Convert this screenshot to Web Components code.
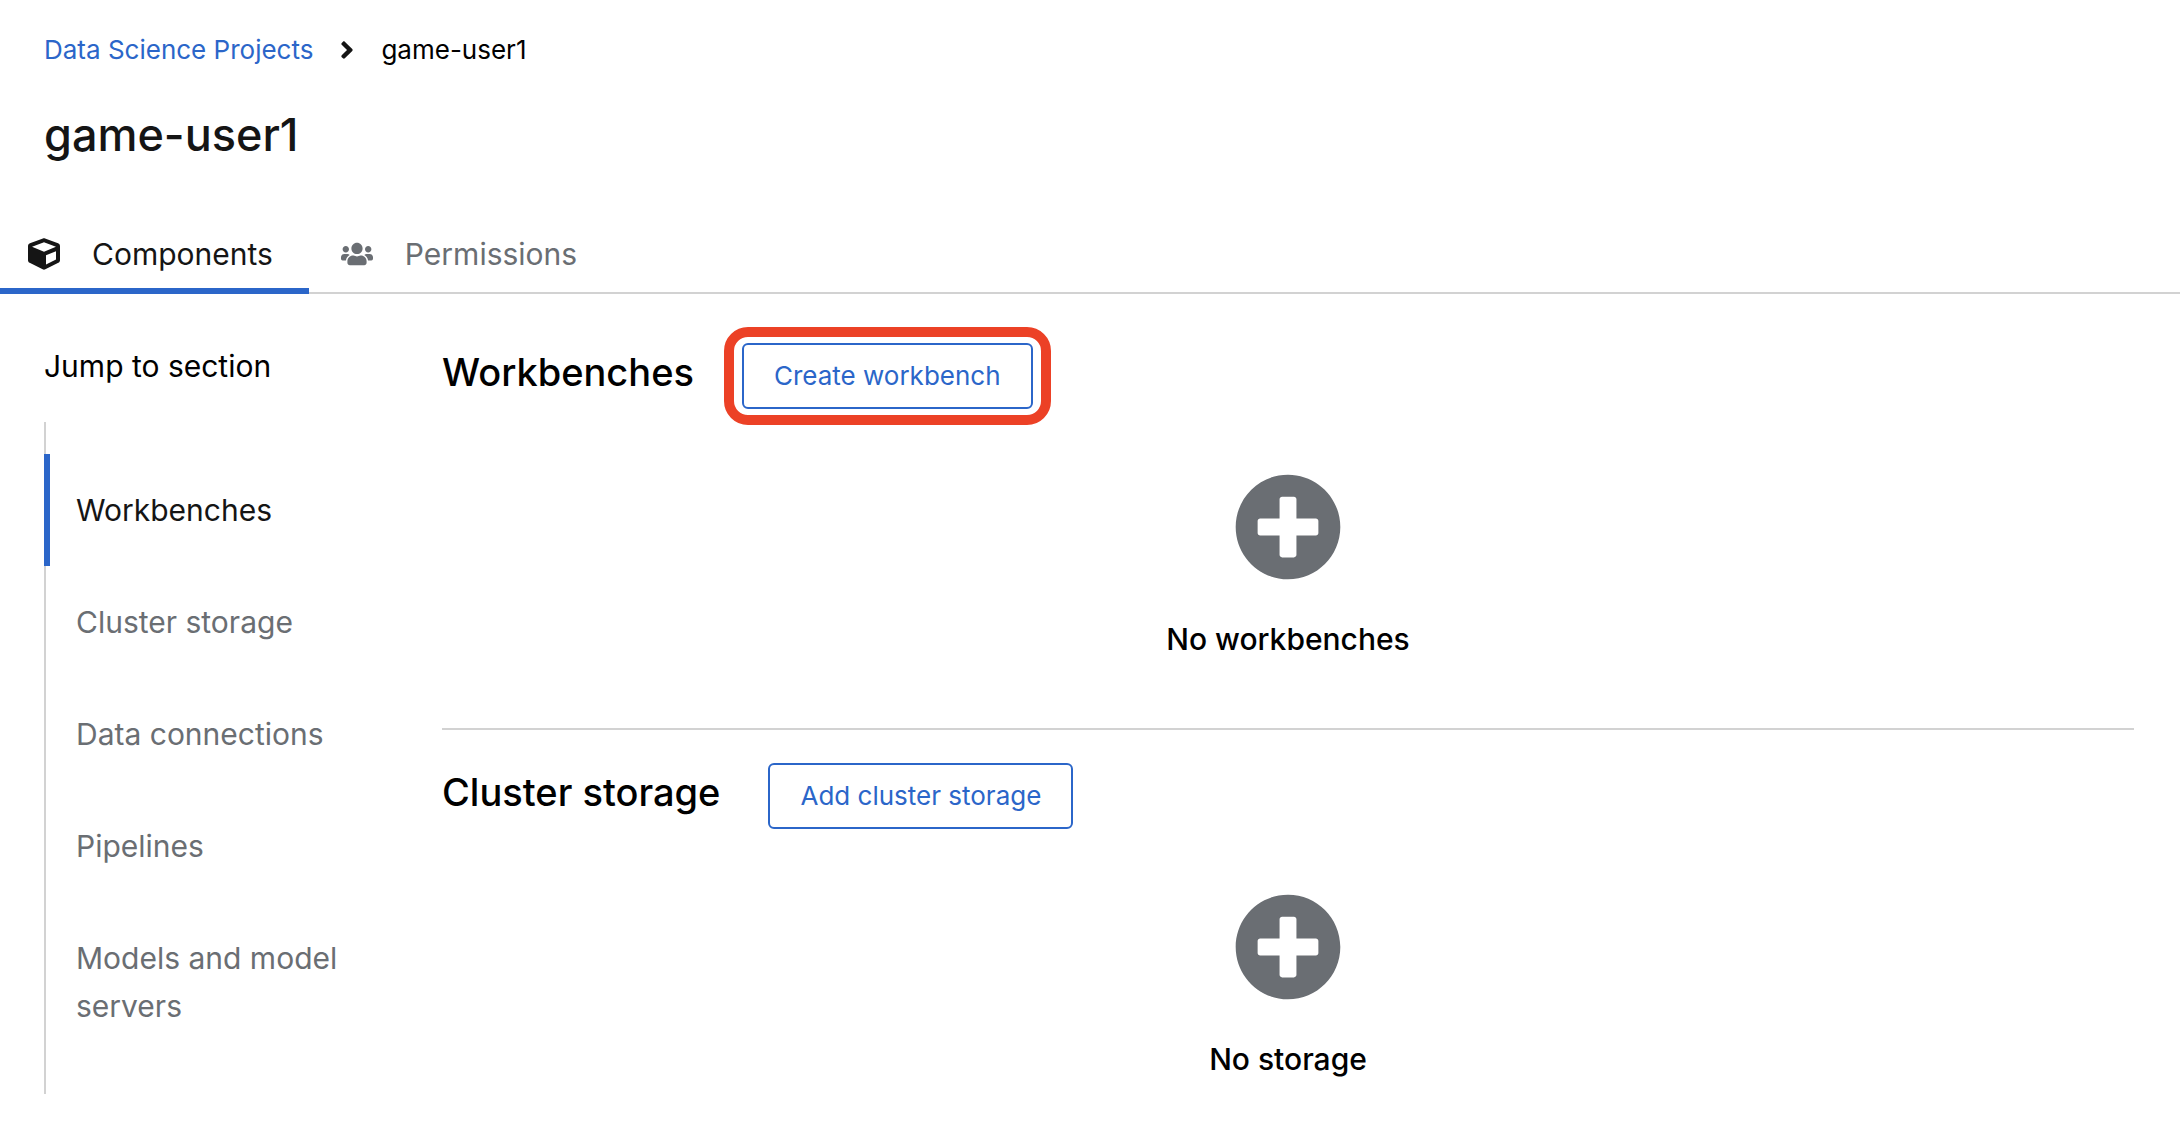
<!DOCTYPE html>
<html lang="en">
<head>
<meta charset="utf-8">
<title>game-user1 - Data Science Projects</title>
<style>
  :root {
    --blue: #2b66c9;
    --ink: #151515;
    --muted: #6a6e73;
    --line: #d2d2d2;
    --mark: #ec4126;
    --text-s: 26px;
    --text-m: 30px;
    --text-l: 38px;
    --text-xl: 45px;
  }
  body {
    margin: 0;
    background: #fff;
    color: #000;
    font-family: Inter, "Liberation Sans", sans-serif;
    font-size: var(--text-m);
    line-height: 48px;
  }
</style>
</head>
<body>
<project-page>
  <bread-crumbs slot="header" parent="Data Science Projects">game-user1</bread-crumbs>
  <page-title slot="header">game-user1</page-title>
  <tab-bar slot="tabs">
    <tab-item icon="cube" current>Components</tab-item>
    <tab-item icon="users">Permissions</tab-item>
  </tab-bar>
  <jump-links slot="side" label="Jump to section">
    <jump-link href="#workbenches" current>Workbenches</jump-link>
    <jump-link href="#storage">Cluster storage</jump-link>
    <jump-link href="#connections">Data connections</jump-link>
    <jump-link href="#pipelines">Pipelines</jump-link>
    <jump-link href="#models">Models and model servers</jump-link>
  </jump-links>
  <project-section id="workbenches" heading="Workbenches">
    <outline-button slot="action" marked>Create workbench</outline-button>
    <empty-state>No workbenches</empty-state>
  </project-section>
  <project-section id="storage" heading="Cluster storage">
    <outline-button slot="action">Add cluster storage</outline-button>
    <empty-state>No storage</empty-state>
  </project-section>
</project-page>

<script>
const ICONS = {
  cube: ['0 0 512 512', 'M239.1 6.3l-208 78c-18.7 7-31.1 25-31.1 45v225.1c0 18.2 10.3 34.8 26.5 42.9l208 104c13.5 6.8 29.4 6.8 42.9 0l208-104c16.3-8.1 26.5-24.8 26.5-42.9V129.3c0-20-12.4-37.9-31.1-44.9l-208-78C262 2.2 250 2.2 239.1 6.3zM256 68.4l192 72v1.1l-192 78-192-78v-1.1l192-72zm32 356V275.5l160-65v133.9l-160 80z'],
  users: ['0 0 640 512', 'M96 224c35.3 0 64-28.7 64-64s-28.7-64-64-64-64 28.7-64 64 28.7 64 64 64zm448 0c35.3 0 64-28.7 64-64s-28.7-64-64-64-64 28.7-64 64 28.7 64 64 64zm32 32h-64c-17.6 0-33.5 7.1-45.1 18.6 40.3 22.1 68.9 62 75.1 109.4h66c17.7 0 32-14.3 32-32v-32c0-35.3-28.7-64-64-64zm-256 0c61.9 0 112-50.1 112-112S381.9 32 320 32 208 82.1 208 144s50.1 112 112 112zm76.8 32h-8.3c-20.8 10-43.9 16-68.5 16s-47.6-6-68.5-16h-8.3C179.6 288 128 339.6 128 403.2V432c0 26.5 21.5 48 48 48h288c26.5 0 48-21.5 48-48v-28.8c0-63.6-51.6-115.2-115.2-115.2zm-223.7-13.4C161.5 263.1 145.6 256 128 256H64c-35.3 0-64 28.7-64 64v32c0 17.7 14.3 32 32 32h65.9c6.3-47.4 34.9-87.3 75.2-109.4z'],
  chevron: ['0 0 256 512', 'M224.3 273l-136 136c-9.4 9.4-24.6 9.4-33.9 0l-22.6-22.6c-9.4-9.4-9.4-24.6 0-33.9l96.4-96.4-96.4-96.4c-9.4-9.4-9.4-24.6 0-33.9L54.3 103c9.4-9.4 24.6-9.4 33.9 0l136 136c9.5 9.4 9.5 24.6.1 34z'],
  plus: ['0 0 512 512', 'M256 8C119 8 8 119 8 256s111 248 248 248 248-111 248-248S393 8 256 8zm144 276c0 6.6-5.4 12-12 12h-92v92c0 6.6-5.4 12-12 12h-56c-6.6 0-12-5.4-12-12v-92h-92c-6.6 0-12-5.4-12-12v-56c0-6.6 5.4-12 12-12h92v-92c0-6.6 5.4-12 12-12h56c6.6 0 12 5.4 12 12v92h92c6.6 0 12 5.4 12 12v56z']
};
const icon = name => `<svg viewBox="${ICONS[name][0]}" fill="currentColor" aria-hidden="true"><path d="${ICONS[name][1]}"/></svg>`;

function define(tag, render) {
  customElements.define(tag, class extends HTMLElement {
    constructor() {
      super();
      this.attachShadow({ mode: 'open' }).innerHTML = render(this);
    }
  });
}

define('project-page', () => `
  <style>
    :host { display: block; }
    header { display: flex; flex-direction: column; gap: 38px; padding: 29px 44px 33px; }
    .body { display: flex; align-items: flex-start; gap: 48px; padding: 0 46px 0 44px; }
    aside { flex: 0 0 350px; padding-top: 48px; }
    main { flex: 1; min-width: 0; padding-top: 16px; }
  </style>
  <header><slot name="header"></slot></header>
  <slot name="tabs"></slot>
  <div class="body">
    <aside><slot name="side"></slot></aside>
    <main><slot></slot></main>
  </div>`);

define('bread-crumbs', el => `
  <style>
    :host { display: block; font-size: var(--text-s); line-height: 42px; }
    ol { display: flex; align-items: center; list-style: none; margin: 0; padding: 0; }
    a { color: var(--blue); text-decoration: none; }
    .sep { display: flex; padding: 0 27px; color: var(--ink); }
    svg { width: 14px; height: 28px; }
  </style>
  <nav aria-label="Breadcrumb"><ol>
    <li><a href="#projects">${el.getAttribute('parent')}</a></li>
    <li class="sep">${icon('chevron')}</li>
    <li aria-current="page"><slot></slot></li>
  </ol></nav>`);

define('page-title', () => `
  <style>
    :host { display: block; color: var(--ink); }
    h1 { margin: 0; font-size: var(--text-xl); font-weight: 500; line-height: 52px; }
  </style>
  <h1><slot></slot></h1>`);

define('tab-bar', () => `
  <style>
    :host { display: block; box-shadow: inset 0 -2px var(--line); }
    nav { display: flex; gap: 4px; }
  </style>
  <nav aria-label="Project"><slot></slot></nav>`);

define('tab-item', el => `
  <style>
    :host { display: block; color: var(--muted); }
    :host([current]) { color: var(--ink); box-shadow: inset 0 -6px var(--blue); }
    button { display: flex; align-items: center; gap: 32px; padding: 36px 36px 16px 28px;
      border: 0; background: none; color: inherit; font: inherit; }
    svg { width: 32px; height: 32px; }
  </style>
  <button type="button">${icon(el.getAttribute('icon'))}<slot></slot></button>`);

define('jump-links', el => `
  <style>
    :host { display: block; }
    nav { display: flex; flex-direction: column; gap: 32px; }
    .list { padding: 32px 0; box-shadow: inset 2px 0 var(--line); }
  </style>
  <nav aria-label="${el.getAttribute('label')}">
    <div>${el.getAttribute('label')}</div>
    <div class="list"><slot></slot></div>
  </nav>`);

define('jump-link', el => `
  <style>
    :host { display: block; color: var(--muted); }
    :host([current]) { color: var(--ink); box-shadow: inset 6px 0 var(--blue); }
    a { display: block; padding: 32px; color: inherit; text-decoration: none; }
  </style>
  <a href="${el.getAttribute('href')}"><slot></slot></a>`);

define('project-section', el => `
  <style>
    :host { display: block; padding: 33px 0 65px; }
    :host(:not(:last-of-type)) { border-bottom: 2px solid var(--line); }
    .head { display: flex; align-items: flex-start; gap: 48px; }
    h2 { margin: 0; font-size: var(--text-l); font-weight: 500; line-height: 58px; }
  </style>
  <section>
    <div class="head"><h2>${el.getAttribute('heading')}</h2><slot name="action"></slot></div>
    <slot></slot>
  </section>`);

define('outline-button', () => `
  <style>
    :host { display: block; position: relative; }
    button { display: block; padding: 10px 30px; border: 2px solid var(--blue); border-radius: 6px;
      background: #fff; color: var(--blue); font: inherit; font-size: var(--text-s); line-height: 42px; }
    :host([marked])::after { content: ""; position: absolute; inset: -16px -18px; pointer-events: none;
      border: 10px solid var(--mark); border-radius: 24px; }
  </style>
  <button type="button"><slot></slot></button>`);

define('empty-state', () => `
  <style>
    :host { display: flex; flex-direction: column; align-items: center; gap: 34px; padding-top: 64px; color: var(--muted); }
    svg { display: block; width: 108px; height: 108px; }
    h3 { margin: 0; color: #000; font-size: var(--text-m); font-weight: 500; line-height: 48px; }
  </style>
  ${icon('plus')}
  <h3><slot></slot></h3>`);
</script>
</body>
</html>
